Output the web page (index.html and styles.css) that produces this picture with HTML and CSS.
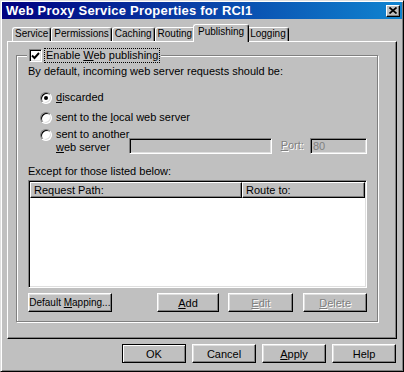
FILE: index.html
```html
<!DOCTYPE html>
<html lang="en">
<head>
    <meta charset="UTF-8">
    <meta name="viewport" content="width=device-width, initial-scale=1.0">
    <title>Web Proxy Service Properties for RCI1</title>
    <link rel="stylesheet" href="styles.css">
</head>
<body>

    <div class="window">
        <div class="titlebar">
            <span class="title">Web Proxy Service Properties for RCI1</span>
            <span class="close-btn">
                <svg width="8" height="7" viewBox="0 0 8 7"><path d="M0.5 0.5 L7.5 6.5 M7.5 0.5 L0.5 6.5" stroke="#000" stroke-width="1.7" fill="none"/></svg>
            </span>
        </div>

        <div class="dialog">
            <div class="tabs">
                <div class="tab">Service</div>
                <div class="tab">Permissions</div>
                <div class="tab">Caching</div>
                <div class="tab">Routing</div>
                <div class="tab active">Publishing</div>
                <div class="tab">Logging</div>
            </div>

            <div class="pane">
                <div class="group">
                    <div class="group-title">
                        <span class="checkbox">
                            <svg width="9" height="8" viewBox="0 0 9 8"><polyline points="1,3.5 3.5,6 8,1" stroke="#000" stroke-width="1.9" fill="none"/></svg>
                        </span>
                        <span class="focus">Enable <u>W</u>eb publishing</span>
                    </div>

                    <p class="intro">By default, incoming web server requests should be:</p>

                    <div class="option first">
                        <span class="radio selected"></span>
                        <span><u>d</u>iscarded</span>
                    </div>
                    <div class="option">
                        <span class="radio"></span>
                        <span>sent to the <u>l</u>ocal web server</span>
                    </div>
                    <div class="option another">
                        <span class="radio"></span>
                        <span class="two-line">sent to another<br><u>w</u>eb server</span>
                        <span class="textbox wide"></span>
                        <span class="disabled-label"><u>P</u>ort:</span>
                        <span class="textbox port">80</span>
                    </div>

                    <p class="except">Except for those listed below:</p>

                    <div class="listview">
                        <div class="list-header">
                            <div class="col path">Request Path:</div>
                            <div class="col route">Route to:</div>
                        </div>
                        <div class="list-body"></div>
                    </div>

                    <div class="group-buttons">
                        <button class="btn mapping">Default <u>M</u>apping...</button>
                        <button class="btn add"><u>A</u>dd</button>
                        <button class="btn edit" disabled><u>E</u>dit</button>
                        <button class="btn delete" disabled><u>D</u>elete</button>
                    </div>
                </div>
            </div>

            <div class="dialog-buttons">
                <button class="btn default">OK</button>
                <button class="btn">Cancel</button>
                <button class="btn"><u>A</u>pply</button>
                <button class="btn">Help</button>
            </div>
        </div>
    </div>

</body>
</html>
```

FILE: styles.css
```css
/* Janela estilo Windows 98 */
body {
    margin: 0;
    font-family: "Liberation Sans", Arial, sans-serif;
    font-size: 11px;
    color: #000;
    background-color: #c0c0c0;
}
.window {
    width: 404px;
    height: 372px;
    box-sizing: border-box;
    padding: 1px;
    background-color: #c0c0c0;
    border: 1px solid;
    border-color: #dfdfdf #000 #000 #dfdfdf;
    box-shadow: inset 1px 1px #fff, inset -1px -1px #808080;
    white-space: nowrap;
}
.titlebar {
    height: 17px;
    display: flex;
    align-items: center;
    justify-content: space-between;
    padding: 0 2px 0 4px;
    background: linear-gradient(90deg, #000080, #1084d0);
    color: #fff;
}
.title {
    font-weight: bold;
    font-size: 13px;
    letter-spacing: 0.2px;
}
.close-btn {
    width: 14px;
    height: 12px;
    box-sizing: border-box;
    display: flex;
    align-items: center;
    justify-content: center;
    background-color: #c0c0c0;
    border: 1px solid;
    border-color: #fff #000 #000 #fff;
    box-shadow: inset -1px -1px #808080;
}
.dialog {
    padding: 0 5px;
}
/* Abas */
.tabs {
    display: flex;
    align-items: flex-end;
    height: 18px;
    margin-top: 5px;
    margin-bottom: -1px;
    padding-left: 5px;
}
.tab {
    height: 14px;
    box-sizing: border-box;
    margin-bottom: 1px;
    padding: 0 2px;
    font-size: 10px;
    line-height: 12px;
    border: 1px solid;
    border-color: #fff #000 transparent #fff;
    border-bottom: none;
    border-radius: 3px 3px 0 0;
    box-shadow: inset -1px 0 #808080;
}
.tab.active {
    position: relative;
    z-index: 1;
    height: 18px;
    margin: 0 -2px;
    padding: 0 4px;
    line-height: 14px;
    background-color: #c0c0c0;
}
.pane {
    height: 298px;
    box-sizing: border-box;
    padding: 13px 18px 0 8px;
    border: 1px solid;
    border-color: #fff #000 #000 #fff;
    box-shadow: inset -1px -1px #808080;
}
/* Caixa de grupo */
.group {
    height: 267px;
    box-sizing: border-box;
    display: flex;
    flex-direction: column;
    padding: 0 10px 0 11px;
    border: 1px solid #808080;
    box-shadow: 1px 1px #fff, inset 1px 1px #fff;
}
.group-title {
    align-self: flex-start;
    display: flex;
    align-items: center;
    gap: 3px;
    height: 13px;
    margin: -7px 0 0 -1px;
    padding: 0 2px;
    background-color: #c0c0c0;
}
.checkbox {
    width: 13px;
    height: 13px;
    box-sizing: border-box;
    display: flex;
    align-items: center;
    justify-content: center;
    background-color: #fff;
    border: 1px solid;
    border-color: #808080 #fff #fff #808080;
    box-shadow: inset 1px 1px #000, inset -1px -1px #dfdfdf;
}
.focus {
    outline: 1px dotted #000;
    padding: 0 1px;
    line-height: 13px;
}
.intro {
    margin: 3px 0 0;
    line-height: 13px;
}
.option {
    display: flex;
    align-items: center;
    gap: 4px;
    margin-top: 7px;
    padding-left: 12px;
    line-height: 13px;
}
.option.first {
    margin-top: 13px;
}
.option.another {
    align-items: flex-end;
    margin-top: 4px;
}
.radio {
    position: relative;
    flex: none;
    width: 12px;
    height: 12px;
    box-sizing: border-box;
    border-radius: 50%;
    background-color: #fff;
    border: 1px solid;
    border-color: #808080 #fff #fff #808080;
    box-shadow: inset 1px 1px #000, inset -1px -1px #dfdfdf;
}
.another .radio {
    align-self: flex-start;
    margin-top: 1px;
}
.radio.selected::after {
    content: "";
    position: absolute;
    left: 3px;
    top: 3px;
    width: 4px;
    height: 4px;
    border-radius: 50%;
    background-color: #000;
}
.two-line {
    width: 69px;
}
.textbox {
    height: 16px;
    box-sizing: border-box;
    padding: 1px 2px;
    color: #808080;
    background-color: #c0c0c0;
    border: 1px solid;
    border-color: #808080 #fff #fff #808080;
    box-shadow: inset 1px 1px #000, inset -1px -1px #dfdfdf;
    line-height: 12px;
}
.textbox.wide {
    width: 145px;
}
.textbox.port {
    width: 58px;
    margin-left: 2px;
}
.disabled-label {
    margin-left: 5px;
    padding-bottom: 2px;
    color: #808080;
    text-shadow: 1px 1px #fff;
}
.except {
    margin: 11px 0 0;
    line-height: 13px;
}
/* Lista */
.listview {
    height: 108px;
    box-sizing: border-box;
    display: flex;
    flex-direction: column;
    margin-top: 2px;
    padding: 1px;
    border: 1px solid;
    border-color: #808080 #fff #fff #808080;
    box-shadow: inset 1px 1px #000, inset -1px -1px #dfdfdf;
}
.list-header {
    display: flex;
    height: 16px;
}
.col {
    box-sizing: border-box;
    padding: 0 3px;
    line-height: 14px;
    border: 1px solid;
    border-color: #fff #000 #000 #fff;
    box-shadow: inset -1px -1px #808080;
}
.col.path {
    width: 212px;
}
.col.route {
    flex: 1;
}
.list-body {
    flex: 1;
    background-color: #fff;
}
/* Botões */
.btn {
    height: 19px;
    box-sizing: border-box;
    padding: 0;
    font-family: inherit;
    font-size: 11px;
    color: #000;
    white-space: nowrap;
    background-color: #c0c0c0;
    border: 1px solid;
    border-color: #fff #000 #000 #fff;
    box-shadow: inset -1px -1px #808080, inset 1px 1px #dfdfdf;
}
.btn:disabled {
    color: #808080;
    text-shadow: 1px 1px #fff;
}
.btn.default {
    border-color: #000;
    box-shadow: inset 1px 1px #fff, inset -1px -1px #808080;
}
.group-buttons {
    display: flex;
    margin-top: 5px;
}
.btn.mapping {
    width: 84px;
    font-size: 10px;
}
.btn.add {
    width: 63px;
    margin-left: 45px;
}
.btn.edit {
    width: 65px;
    margin-left: 9px;
}
.btn.delete {
    width: 64px;
    margin-left: 10px;
}
.dialog-buttons {
    display: flex;
    justify-content: flex-end;
    gap: 6px;
    margin-top: 5px;
    padding-right: 1px;
}
.dialog-buttons .btn {
    width: 64px;
}
```
